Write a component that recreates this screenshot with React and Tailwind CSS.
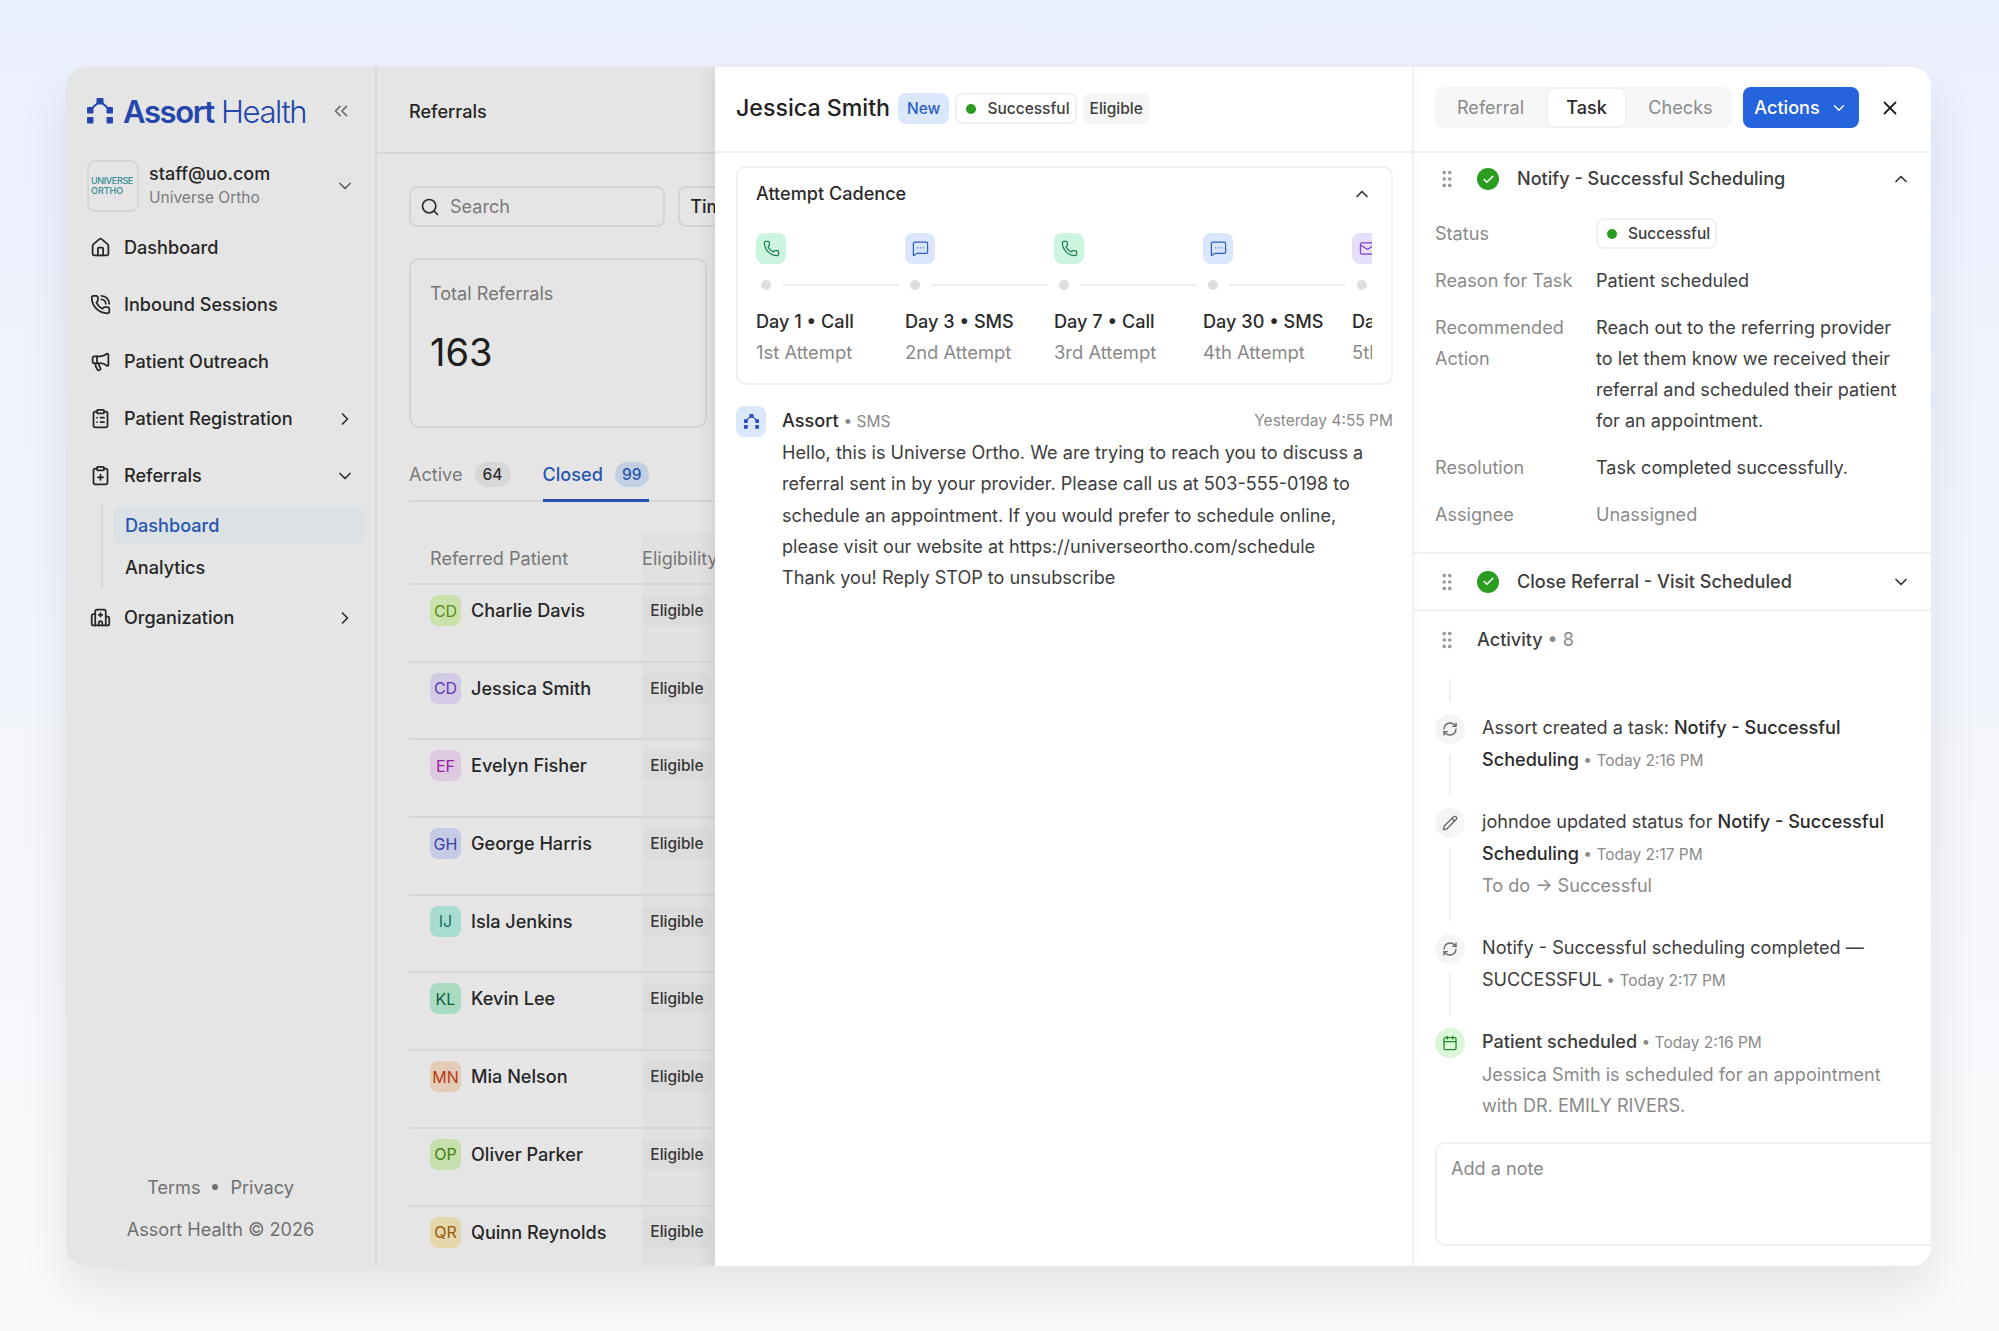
import {
  Calendar,
  Check,
  ChevronDown,
  ChevronRight,
  ChevronUp,
  ChevronsLeft,
  ClipboardList,
  ClipboardPlus,
  GripVertical,
  Hospital,
  House,
  Mail,
  Megaphone,
  MessageSquareMore,
  Pencil,
  Phone,
  PhoneCall,
  RefreshCw,
  Search,
  X,
} from "lucide-react";

const patients = [
  ["CD", "Charlie Davis", "bg-[#e2fcc0] text-[#66a018]"],
  ["CD", "Jessica Smith", "bg-[#ebe2ff] text-[#6f3fd0]"],
  ["EF", "Evelyn Fisher", "bg-[#f8e0fb] text-[#a925b5]"],
  ["GH", "George Harris", "bg-[#dde3ff] text-[#3f4cb8]"],
  ["IJ", "Isla Jenkins", "bg-[#bdf5e8] text-[#14806e]"],
  ["KL", "Kevin Lee", "bg-[#bdf3d8] text-[#126b3f]"],
  ["MN", "Mia Nelson", "bg-[#fde5cf] text-[#cf3f14]"],
  ["OP", "Oliver Parker", "bg-[#dcfac0] text-[#4c9010]"],
  ["QR", "Quinn Reynolds", "bg-[#fff0c0] text-[#a8660a]"],
];

const attempts = [
  ["Day 1 • Call", "1st Attempt", "call"],
  ["Day 3 • SMS", "2nd Attempt", "sms"],
  ["Day 7 • Call", "3rd Attempt", "call"],
  ["Day 30 • SMS", "4th Attempt", "sms"],
  ["Day 60 • Email", "5th Attempt", "email"],
];

function LogoMark({ className }) {
  return (
    <svg viewBox="0 0 26 26" className={className} fill="currentColor">
      <path d="M13 3 3 12M13 3l10 9" stroke="currentColor" strokeWidth="2" fill="none" />
      <rect x="9.5" y="0" width="7" height="6.5" rx="1" />
      <rect x="0" y="9" width="6.5" height="6.5" rx="1" />
      <rect x="0" y="19" width="6.5" height="6.5" rx="1" />
      <rect x="19.5" y="9" width="6.5" height="6.5" rx="1" />
      <rect x="19.5" y="19" width="6.5" height="6.5" rx="1" />
    </svg>
  );
}

function NavItem({ icon: Icon, label, chevron }) {
  return (
    <div className="flex h-[57px] items-center pl-[24px] pr-[20px]">
      <Icon size={21} strokeWidth={2} className="text-[#2b2b2b]" />
      <span className="ml-[13px] flex-1 text-[18.1px] font-medium text-[#2b2b2b]">{label}</span>
      {chevron === "right" && <ChevronRight size={20} strokeWidth={2} className="text-[#333]" />}
      {chevron === "down" && <ChevronDown size={20} strokeWidth={2} className="text-[#333]" />}
    </div>
  );
}

function Sidebar() {
  return (
    <aside className="flex h-full w-[311px] shrink-0 flex-col border-r-2 border-[#f0f0f0]">
      <div className="flex h-[88px] items-center pl-[21px] pr-[23px]">
        <LogoMark className="h-[26px] w-[26px] text-[#2a4fc0]" />
        <span className="ml-[10px] flex-1 text-[31px] leading-none tracking-[-0.045em] text-[#2a4fc0]">
          <span className="font-semibold">Assort</span> <span className="font-light">Health</span>
        </span>
        <ChevronsLeft size={22} strokeWidth={1.75} className="text-[#777]" />
      </div>
      <div className="ml-[21px] mr-[20px] mt-[5px] flex h-[52px] items-center">
        <div className="flex h-[52px] w-[52px] shrink-0 flex-col justify-center rounded-[8px] border-2 border-[#f0f0f0] pl-[2px] text-[9px] font-medium leading-[10px] text-[#3a9aa6]">
          <span className="tracking-[-0.04em]">UNIVERSE</span>
          <span>ORTHO</span>
        </div>
        <div className="-mt-[3px] ml-[10px] flex-1">
          <div className="text-[18px] font-medium leading-[26px] text-[#2b2b2b]">staff@uo.com</div>
          <div className="text-[15.5px] leading-[21px] text-[#8a8a8a]">Universe Ortho</div>
        </div>
        <ChevronDown size={20} strokeWidth={2} className="text-[#666]" />
      </div>
      <nav className="mt-[7px] flex flex-col">
        <NavItem icon={House} label="Dashboard" />
        <NavItem icon={PhoneCall} label="Inbound Sessions" />
        <NavItem icon={Megaphone} label="Patient Outreach" />
        <NavItem icon={ClipboardList} label="Patient Registration" chevron="right" />
        <NavItem icon={ClipboardPlus} label="Referrals" chevron="down" />
        <div className="ml-[35px] flex flex-col gap-[5px] border-l-2 border-[#f0f0f0] py-[3px] pl-[11px] pr-[10px]">
          <div className="flex h-[37px] items-center rounded-[8px] bg-[#f4fbff] pl-[11px] text-[18.1px] font-medium text-[#2a5fc4]">
            Dashboard
          </div>
          <div className="flex h-[37px] items-center pl-[11px] text-[18.1px] font-medium text-[#2b2b2b]">Analytics</div>
        </div>
        <NavItem icon={Hospital} label="Organization" chevron="right" />
      </nav>
      <div className="mt-auto flex flex-col items-center gap-[18px] pb-[25px] text-[18.1px] leading-[24px] text-[#7d7d7d]">
        <div className="flex items-center gap-[12px]">
          <span>Terms</span>
          <span className="h-[6px] w-[6px] rounded-full bg-[#7d7d7d]" />
          <span>Privacy</span>
        </div>
        <div>Assort Health © 2026</div>
      </div>
    </aside>
  );
}

function ReferralsList() {
  return (
    <main className="h-full min-w-0 flex-1 overflow-hidden">
      <div className="flex h-[87px] items-center border-b-2 border-[#f0f0f0] pl-[32px] pt-[4px] text-[18.1px] font-medium text-[#2b2b2b]">
        Referrals
      </div>
      <div className="w-[460px] pl-[32px]">
        <div className="mt-[32px] flex gap-[13px]">
          <div className="flex h-[41px] w-[258px] items-center rounded-[8px] border-2 border-[#ededed] pl-[9px] text-[18.1px] text-[#8a8a8a]">
            <Search size={20} strokeWidth={2} className="text-[#333]" />
            <span className="ml-[10px]">Search</span>
          </div>
          <div className="flex h-[41px] w-[160px] items-center rounded-[8px] border-2 border-[#ededed] pl-[10px] text-[18.1px] font-medium text-[#2b2b2b]">
            Timeframe
          </div>
        </div>
        <div className="mt-[31px] h-[170px] w-[298px] rounded-[10px] border-2 border-[#ededed] pl-[19px]">
          <div className="mt-[21px] text-[18.1px] leading-[24px] text-[#858585]">Total Referrals</div>
          <div className="mt-[25px] text-[38px] leading-[44px] text-[#222]">163</div>
        </div>
        <div className="mt-[19px] flex h-[55px] items-center border-b-2 border-[#f0f0f0] pt-[2px] text-[18.1px]">
          <span className="text-[#8a8a8a]">Active</span>
          <span className="ml-[12px] flex h-[25px] w-[36px] items-center justify-center rounded-full bg-[#f0f0f0] text-[15.5px] font-medium text-[#333]">
            64
          </span>
          <div className="relative ml-[32px] flex h-full items-center">
            <span className="font-medium text-[#2a5fc4]">Closed</span>
            <span className="ml-[12px] flex h-[25px] w-[34px] items-center justify-center rounded-full bg-[#d9e6fb] text-[15.5px] font-medium text-[#2a5fc4]">
              99
            </span>
            <div className="absolute inset-x-0 -bottom-[2px] h-[3px] bg-[#2a5fc4]" />
          </div>
        </div>
        <div className="mt-[30px] flex h-[53px] border-b-2 border-[#f0f0f0] text-[18.1px] text-[#858585]">
          <div className="w-[233px] pl-[21px] pt-[13px]">Referred Patient</div>
          <div className="flex-1 bg-[#fbfbfb] pt-[13px]">Eligibility</div>
        </div>
        {patients.map(([initials, name, color]) => (
          <div key={name} className="flex h-[77.7px] border-b-2 border-[#f0f0f0]">
            <div className="flex w-[233px] items-start pl-[21px] pt-[10px]">
              <div className={`flex h-[31px] w-[31px] items-center justify-center rounded-[8px] text-[16px] ${color}`}>
                {initials}
              </div>
              <div className="ml-[10px] text-[18.1px] font-medium leading-[30px] text-[#2b2b2b]">{name}</div>
            </div>
            <div className="flex-1 bg-[#fbfbfb] pt-[10px]">
              <div className="flex h-[31px] w-[70px] items-center justify-center rounded-[8px] bg-[#f5f5f5] text-[15.5px] font-medium text-[#3d3d3d]">
                Eligible
              </div>
            </div>
          </div>
        ))}
      </div>
    </main>
  );
}

function AttemptIcon({ kind }) {
  if (kind === "call") {
    return (
      <div className="flex h-[31px] w-[30px] items-center justify-center rounded-[8px] bg-[#ccf5df] text-[#1f7a55]">
        <Phone size={17} strokeWidth={1.75} />
      </div>
    );
  }
  if (kind === "sms") {
    return (
      <div className="flex h-[31px] w-[30px] items-center justify-center rounded-[8px] bg-[#d9e6fb] text-[#2a5fc4]">
        <MessageSquareMore size={17} strokeWidth={1.75} />
      </div>
    );
  }
  return (
    <div className="flex h-[31px] w-[30px] items-center justify-center rounded-[8px] bg-[#e6dffa] text-[#7a3fd0]">
      <Mail size={17} strokeWidth={1.75} />
    </div>
  );
}

function Chip({ children, className }) {
  return (
    <span className={`flex h-[31px] items-center rounded-[8px] text-[15.5px] font-medium ${className}`}>{children}</span>
  );
}

function SuccessChip({ className }) {
  return (
    <Chip className={`border-2 border-[#f0f0f0] pl-[9px] pr-[5px] text-[#3d3d3d] ${className ?? ""}`}>
      <span className="mr-[11px] h-[10px] w-[10px] rounded-full bg-[#2a9d1f]" />
      Successful
    </Chip>
  );
}

function DetailPanel() {
  return (
    <section className="relative z-10 flex h-full w-[699px] shrink-0 flex-col border-r-2 border-[#f0f0f0] bg-white shadow-[-6px_0_14px_rgba(0,0,0,0.07)]">
      <div className="flex h-[86px] shrink-0 items-center gap-[6px] border-b-2 border-[#f0f0f0] pb-[1px] pl-[21px]">
        <h1 className="mr-[2px] text-[23.2px] font-medium text-[#222]">Jessica Smith</h1>
        <Chip className="bg-[#dbe8fc] px-[9px] text-[#2a5fc4]">New</Chip>
        <SuccessChip />
        <Chip className="bg-[#f5f5f5] px-[7px] text-[#3d3d3d]">Eligible</Chip>
      </div>

      <div className="ml-[21px] mr-[19px] mt-[13px] rounded-[10px] border-2 border-[#f0f0f0] pb-[19px] pl-[18px] pr-[19px] pt-[14px]">
        <div className="flex h-[24px] items-center justify-between">
          <span className="text-[18.1px] font-medium text-[#2b2b2b]">Attempt Cadence</span>
          <ChevronUp size={20} strokeWidth={2} className="text-[#333]" />
        </div>
        <div className="mt-[27px] flex overflow-hidden">
          {attempts.map(([title, sub, kind], i) => (
            <div key={title} className="w-[149px] shrink-0">
              <AttemptIcon kind={kind} />
              <div className="mt-[16px] flex items-center pl-[5px]">
                <span className="h-[10px] w-[10px] rounded-full bg-[#dedede]" />
                {i < 4 && <span className="ml-[11px] h-[2px] w-[117px] bg-[#eeeeee]" />}
              </div>
              <div className="mt-[19px] whitespace-nowrap text-[18.1px] font-medium leading-[24px] text-[#2b2b2b]">{title}</div>
              <div className="mt-[7px] whitespace-nowrap text-[18.4px] leading-[24px] text-[#8a8a8a]">{sub}</div>
            </div>
          ))}
        </div>
      </div>

      <div className="ml-[21px] mr-[19px] mt-[21px] flex gap-[16px]">
        <div className="flex h-[31px] w-[30px] shrink-0 items-center justify-center rounded-[8px] bg-[#dbe8fc]">
          <LogoMark className="h-[15px] w-[15px] text-[#2a4fc0]" />
        </div>
        <div className="flex-1 pt-[3px]">
          <div className="flex h-[24px] items-center justify-between">
            <span className="text-[18.1px] font-medium text-[#2b2b2b]">
              Assort <span className="text-[15.5px] font-normal text-[#8a8a8a]">• SMS</span>
            </span>
            <span className="text-[15.5px] text-[#8a8a8a]">Yesterday 4:55 PM</span>
          </div>
          <p className="mt-[4px] whitespace-nowrap text-[18.1px] leading-[31.25px] text-[#3d3d3d]">
            Hello, this is Universe Ortho. We are trying to reach you to discuss a
            <br />
            referral sent in by your provider. Please call us at 503-555-0198 to
            <br />
            schedule an appointment. If you would prefer to schedule online,
            <br />
            please visit our website at https://universeortho.com/schedule
            <br />
            Thank you! Reply STOP to unsubscribe
          </p>
        </div>
      </div>
    </section>
  );
}

function TaskHeader({ title, open }) {
  const Chevron = open ? ChevronUp : ChevronDown;
  return (
    <div className="flex flex-1 items-center pl-[23px] pr-[20px]">
      <GripVertical size={22} strokeWidth={2} className="-ml-[1px] text-[#999]" />
      <span className="ml-[19px] flex h-[22px] w-[22px] items-center justify-center rounded-full bg-[#2a9d1f]">
        <Check size={13} strokeWidth={3} className="text-white" />
      </span>
      <span className="ml-[18px] flex-1 text-[18.1px] font-medium text-[#3d3d3d]">{title}</span>
      <Chevron size={20} strokeWidth={2} className="text-[#333]" />
    </div>
  );
}

function Field({ label, children, muted, className }) {
  return (
    <div className={`flex text-[18.1px] leading-[31.25px] ${className ?? ""}`}>
      <div className="w-[161px] shrink-0 pr-[20px] text-[#8a8a8a]">{label}</div>
      <div className={muted ? "text-[#8a8a8a]" : "text-[#3d3d3d]"}>{children}</div>
    </div>
  );
}

function ActivityItem({ icon: Icon, tone, last, children }) {
  return (
    <div className="flex gap-[17px]">
      <div className={`flex w-[30px] shrink-0 flex-col items-center ${last ? "" : "mb-[13px]"}`}>
        <span className={`flex h-[30px] w-[30px] items-center justify-center rounded-full ${tone ?? "bg-[#f5f5f5] text-[#666]"}`}>
          <Icon size={16} strokeWidth={2} />
        </span>
        {!last && <span className="mt-[10px] w-[2px] flex-1 bg-[#f0f0f0]" />}
      </div>
      <div className={`-mt-[2px] flex-1 whitespace-nowrap text-[18.1px] leading-[31.5px] text-[#3d3d3d] ${last ? "pb-[20px]" : "pb-[32.25px]"}`}>
        {children}
      </div>
    </div>
  );
}

function Time({ children }) {
  return <span className="text-[15.5px] text-[#8a8a8a]"> • {children}</span>;
}

function TaskPanel() {
  return (
    <section className="flex h-full min-w-0 flex-1 flex-col overflow-hidden bg-white">
      <div className="flex h-[86px] shrink-0 items-start border-b-2 border-[#f0f0f0] pl-[21px] pt-[20px]">
        <div className="flex h-[41px] w-[297px] rounded-[8px] bg-[#f7f7f7] text-[18.1px]">
          <span className="flex w-[111px] items-center justify-center text-[#8a8a8a]">Referral</span>
          <span className="flex w-[81px] items-center justify-center rounded-[8px] border-2 border-[#f0f0f0] bg-white font-medium text-[#2b2b2b]">
            Task
          </span>
          <span className="flex w-[105px] items-center justify-center pl-[2px] text-[#8a8a8a]">Checks</span>
        </div>
        <button className="ml-[11px] flex h-[41px] w-[116px] items-center justify-center gap-[10px] rounded-[8px] bg-[#2563dc] text-[18.1px] font-medium text-white">
          Actions
          <ChevronDown size={18} strokeWidth={2} />
        </button>
        <X size={22} strokeWidth={2} className="ml-[20px] mt-[10px] text-[#222]" />
      </div>

      <div className="flex h-[52px] shrink-0">
        <TaskHeader title="Notify - Successful Scheduling" open />
      </div>
      <div className="flex flex-col gap-[15px] border-b-2 border-[#f0f0f0] px-[21px] pb-[22px] pt-[13px]">
        <Field label="Status" className="mb-[1px]">
          <SuccessChip className="w-fit" />
        </Field>
        <Field label="Reason for Task">Patient scheduled</Field>
        <Field label="Recommended Action">
          Reach out to the referring provider
          <br />
          to let them know we received their
          <br />
          referral and scheduled their patient
          <br />
          for an appointment.
        </Field>
        <Field label="Resolution">Task completed successfully.</Field>
        <Field label="Assignee" className="mt-[1px]" muted>
          Unassigned
        </Field>
      </div>
      <div className="flex h-[57px] shrink-0 border-b-2 border-[#f0f0f0]">
        <TaskHeader title="Close Referral - Visit Scheduled" />
      </div>

      <div className="px-[21px] pt-[17px]">
        <div className="flex h-[24px] items-center">
          <GripVertical size={22} strokeWidth={2} className="ml-[1px] text-[#999]" />
          <span className="ml-[19px] text-[18.1px] font-medium text-[#3d3d3d]">
            Activity <span className="font-normal text-[#8a8a8a]">• 8</span>
          </span>
        </div>
        <div className="ml-[14px] mt-[27px] h-[23px] w-[2px] bg-[#f0f0f0]" />
        <div className="mt-[12px]">
          <ActivityItem icon={RefreshCw}>
            Assort created a task: <span className="font-medium text-[#2b2b2b]">Notify - Successful</span>
            <br />
            <span className="font-medium text-[#2b2b2b]">Scheduling</span>
            <Time>Today 2:16 PM</Time>
          </ActivityItem>
          <ActivityItem icon={Pencil}>
            johndoe updated status for <span className="font-medium text-[#2b2b2b]">Notify - Successful</span>
            <br />
            <span className="font-medium text-[#2b2b2b]">Scheduling</span>
            <Time>Today 2:17 PM</Time>
            <br />
            <span className="text-[#8a8a8a]">To do → Successful</span>
          </ActivityItem>
          <ActivityItem icon={RefreshCw}>
            Notify - Successful scheduling completed —
            <br />
            SUCCESSFUL
            <Time>Today 2:17 PM</Time>
          </ActivityItem>
          <ActivityItem icon={Calendar} tone="bg-[#dcf7d8] text-[#2a8a2a]" last>
            <span className="font-medium">Patient scheduled</span>
            <Time>Today 2:16 PM</Time>
            <br />
            <span className="text-[#8a8a8a]">
              Jessica Smith is scheduled for an appointment
              <br />
              with DR. EMILY RIVERS.
            </span>
          </ActivityItem>
        </div>
        <div className="h-[104px] w-[520px] rounded-[10px] border-2 border-[#f0f0f0] pl-[14px] pt-[12px] text-[18.1px] leading-[24px] text-[#8a8a8a]">
          Add a note
        </div>
      </div>
    </section>
  );
}

export default function App() {
  return (
    <div className="h-[1331px] overflow-hidden bg-gradient-to-b from-[#ebf0fe] to-[#fafafa] pl-[66px] pt-[67px] font-['Inter',sans-serif]">
      <div className="flex h-[1199px] w-[1865px] overflow-hidden rounded-[20px] bg-white shadow-[0_24px_50px_rgba(0,0,0,0.09)]">
        <div className="relative flex h-full w-[649px] shrink-0">
          <Sidebar />
          <ReferralsList />
          <div className="absolute inset-0 bg-black/10" />
        </div>
        <DetailPanel />
        <TaskPanel />
      </div>
    </div>
  );
}
